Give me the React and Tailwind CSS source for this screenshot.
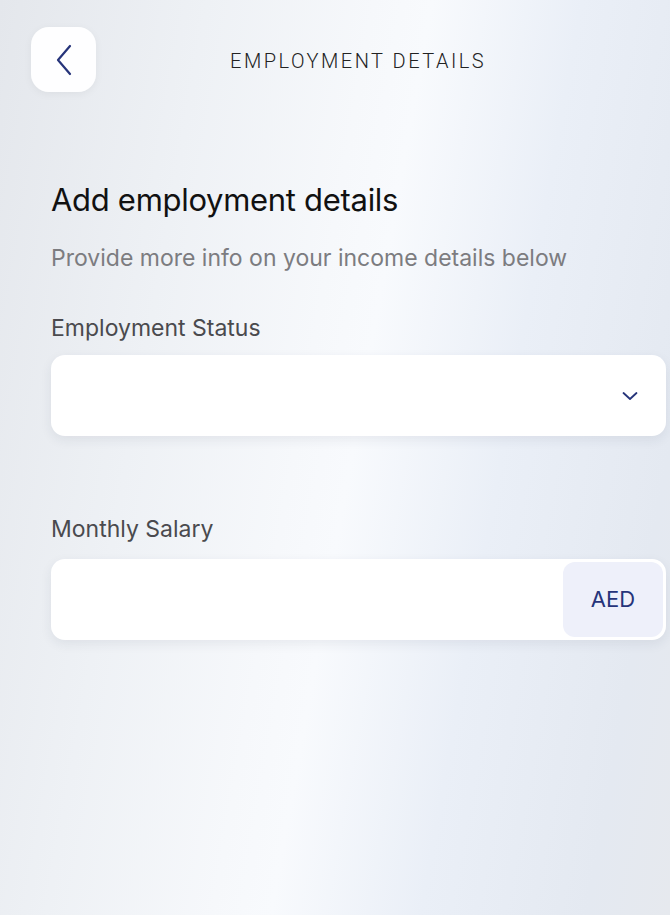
export default function App() {
  return (
    <div className="relative w-[670px] h-[915px] overflow-hidden bg-[linear-gradient(100deg,#e4e7ec_0%,#eef1f5_25%,#f6f8fb_45%,#f8fafd_52%,#eaeff7_70%,#e4e9f1_90%,#e6e9ee_100%)] font-['Inter','Noto_Sans',sans-serif]">
      <div className="flex items-center h-[65px] mt-[27px] pl-[31px]">
        <button className="w-[65px] h-[65px] rounded-[18px] bg-white/95 shadow-[0_2px_8px_rgba(0,0,0,0.05)] flex items-center justify-center">
          <svg width="20" height="32" viewBox="0 0 20 32" fill="none">
            <path d="M16 2 L4 16 L16 30" stroke="#26347a" strokeWidth="2.2" strokeLinecap="round" strokeLinejoin="round" />
          </svg>
        </button>
        <div className="ml-[134px] mt-[3px] text-[20px] tracking-[2.5px] font-light text-[#222] font-['Roboto',sans-serif]">EMPLOYMENT DETAILS</div>
      </div>

      <div className="pl-[51px] pr-[4px]">
        <h1 className="mt-[88px] text-[31px] leading-[40px] text-[#111] font-normal tracking-[-0.3px]">Add employment details</h1>
        <p className="mt-[23px] text-[23px] leading-[30px] text-[#7c7c80]">Provide more info on your income details below</p>

        <div className="mt-[40px] text-[23px] leading-[30px] text-[#4a4a4e]">Employment Status</div>
        <div className="mt-[12px] h-[81px] rounded-[14px] bg-white shadow-[0_4px_12px_rgba(40,50,80,0.08)] flex items-center justify-end pr-[28px]">
          <svg width="16" height="10" viewBox="0 0 16 10" fill="none">
            <path d="M1.5 2 L8 8 L14.5 2" stroke="#26347a" strokeWidth="1.8" strokeLinecap="round" strokeLinejoin="round" />
          </svg>
        </div>

        <div className="mt-[78px] text-[23px] leading-[30px] text-[#4a4a4e]">Monthly Salary</div>
        <div className="mt-[15px] h-[81px] rounded-[14px] bg-white shadow-[0_4px_12px_rgba(40,50,80,0.08)] flex items-stretch justify-end p-[3px]">
          <div className="w-[100px] rounded-[12px] bg-[#eef0fa] flex items-center justify-center text-[22px] text-[#26347a]">AED</div>
        </div>
      </div>
    </div>
  );
}
